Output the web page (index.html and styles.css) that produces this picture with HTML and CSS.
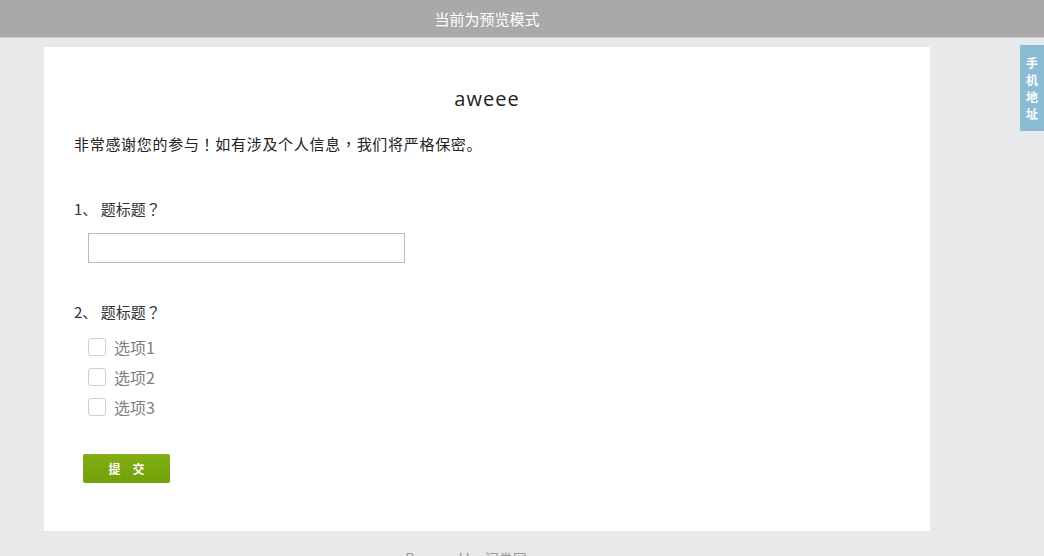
FILE: index.html
```html
<!DOCTYPE html>
<html lang="zh-CN">
<head>
<meta charset="utf-8">
<title>aweee</title>
<link rel="stylesheet" href="styles.css">
</head>
<body>
<div class="preview-bar">当前为预览模式</div>
<div class="page">
  <div class="card">
    <h1 class="title">aweee</h1>
    <p class="desc">非常感谢您的参与<span class="mid-punct" lang="zh-Hant">！</span>如有涉及个人信息<span class="mid-punct" lang="zh-Hant">，</span>我们将严格保密。</p>
    <div class="question">
      <div class="q-title">1、 题标题<span class="mid-punct" lang="zh-Hant">？</span></div>
      <input class="text-input" type="text">
    </div>
    <div class="question q2">
      <div class="q-title">2、 题标题<span class="mid-punct" lang="zh-Hant">？</span></div>
      <div class="options">
        <label class="option"><span class="box"></span><span>选项1</span></label>
        <label class="option"><span class="box"></span><span>选项2</span></label>
        <label class="option"><span class="box"></span><span>选项3</span></label>
      </div>
    </div>
    <button class="submit" type="button">提　交</button>
  </div>
  <div class="footer">Powered by 问卷网</div>
</div>
<div class="side-tab">手<br>机<br>地<br>址</div>
</body>
</html>
```
FILE: styles.css
```css
html, body {
  margin: 0;
  padding: 0;
}
body {
  background: #e8e9eb;
  font-family: "Noto Sans CJK SC", "Liberation Sans", sans-serif;
  color: #333;
  overflow: hidden;
  height: 556px;
}
.preview-bar {
  height: 37px;
  line-height: 37px;
  background: #a9a9a9;
  color: #fff;
  text-align: center;
  font-size: 15px;
  padding-right: 70px;
  border-bottom: 1px solid #c9cacc;
}
.page {
  padding: 9px 0 0 44px;
  width: 886px;
}
.card {
  background: #fff;
  padding: 38px 30px 48px 30px;
  display: flex;
  flex-direction: column;
  align-items: flex-start;
}
.title {
  align-self: stretch;
  margin: 0;
  text-align: center;
  font-family: "Open Sans", "Noto Sans", sans-serif;
  font-weight: 400;
  font-size: 20px;
  line-height: 28px;
  letter-spacing: 1px;
  color: #222;
}
.desc {
  margin: 19px 0 0 0;
  font-size: 15px;
  line-height: 24px;
  letter-spacing: 0.7px;
  color: #222;
}
.mid-punct {
  font-family: "Noto Sans CJK TC", sans-serif;
}
.question {
  margin-top: 41px;
  display: flex;
  flex-direction: column;
  align-items: flex-start;
}
.q2 {
  margin-top: 37px;
}
.q-title {
  font-size: 15px;
  line-height: 24px;
  color: #333;
}
.text-input {
  margin: 12px 0 0 14px;
  width: 317px;
  height: 30px;
  box-sizing: border-box;
  border: 1px solid #a9bfcf;
  padding: 0 6px;
  background: #fff;
  outline: none;
}
.options {
  margin: 8px 0 0 14px;
  display: flex;
  flex-direction: column;
}
.option {
  height: 30px;
  display: flex;
  align-items: center;
  gap: 8px;
  font-size: 16px;
  color: #808080;
}
.box {
  width: 16px;
  height: 16px;
  border: 1px solid #cfcfcf;
  border-radius: 3px;
  background: #fff;
}
.submit {
  margin: 32px 0 0 9px;
  width: 87px;
  height: 29px;
  border: none;
  border-radius: 2px;
  background: linear-gradient(#82af14, #73a008);
  color: #fff;
  font-family: "Noto Sans CJK SC", sans-serif;
  font-size: 12px;
  font-weight: 700;
  padding: 0;
}
.footer {
  margin-top: 17px;
  text-align: center;
  padding-right: 42px;
  font-size: 14px;
  color: #999;
}
.side-tab {
  position: absolute;
  top: 45px;
  right: 0;
  width: 24px;
  height: 86px;
  box-sizing: border-box;
  padding-top: 9px;
  background: #8bbcd6;
  color: #fff;
  font-size: 12px;
  font-weight: 700;
  line-height: 17px;
  text-align: center;
}
```
